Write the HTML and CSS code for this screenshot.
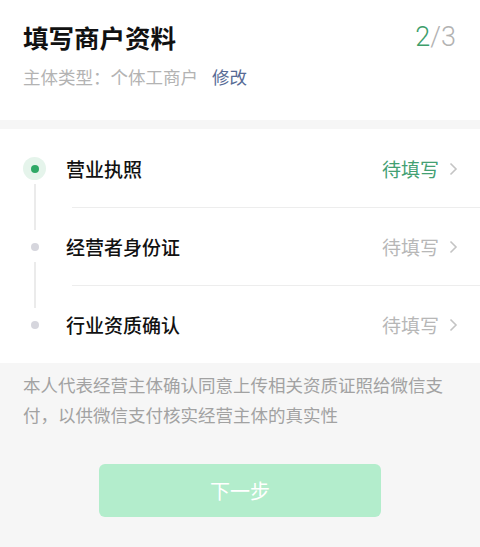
FILE: index.html
```html
<!DOCTYPE html>
<html lang="zh-CN">
  <head>
    <meta charset="utf-8"/>
    <title>填写商户资料</title>
    <link rel="stylesheet" href="styles.css">
  </head>

  <body>
    <header class="head">
      <div class="head-top">
        <h1 class="title">填写商户资料</h1>
        <div class="step"><span class="step-now">2</span>/3</div>
      </div>
      <p class="sub">主体类型：个体工商户<a class="edit" href="#">修改</a></p>
    </header>

    <ul class="steps">
      <li class="row active">
        <span class="mark"></span>
        <span class="name">营业执照</span>
        <span class="state">待填写</span>
        <svg class="arrow" width="9" height="14" viewBox="0 0 9 14"><polyline points="1.5,1.5 7,7 1.5,12.5" fill="none" stroke="#c4c4c4" stroke-width="1.6"/></svg>
      </li>
      <li class="sep"></li>
      <li class="row">
        <span class="mark"></span>
        <span class="name">经营者身份证</span>
        <span class="state">待填写</span>
        <svg class="arrow" width="9" height="14" viewBox="0 0 9 14"><polyline points="1.5,1.5 7,7 1.5,12.5" fill="none" stroke="#c4c4c4" stroke-width="1.6"/></svg>
      </li>
      <li class="sep"></li>
      <li class="row last">
        <span class="mark"></span>
        <span class="name">行业资质确认</span>
        <span class="state">待填写</span>
        <svg class="arrow" width="9" height="14" viewBox="0 0 9 14"><polyline points="1.5,1.5 7,7 1.5,12.5" fill="none" stroke="#c4c4c4" stroke-width="1.6"/></svg>
      </li>
    </ul>

    <p class="notice">本人代表经营主体确认同意上传相关资质证照给微信支付，以供微信支付核实经营主体的真实性</p>

    <div class="actions">
      <button class="next" disabled>下一步</button>
    </div>
  </body>

</html>
```

FILE: styles.css
```css
* {
  box-sizing: border-box;
}

body {
  margin: 0;
  background-color: #f6f6f6;
  color: #111;
  font-family: "Noto Sans CJK SC", "Noto Sans", sans-serif;
}

.head {
  background-color: #fff;
  padding: 19px 24px 30px 23px;
}

.head-top {
  display: flex;
  justify-content: space-between;
  align-items: center;
}

.title {
  margin: 0;
  font-size: 25.5px;
  line-height: 36px;
  font-weight: 700;
}

.step {
  font-family: Roboto, "Noto Sans", sans-serif;
  font-weight: 300;
  font-size: 27px;
  line-height: 36px;
  color: #b2b2b2;
}

.step-now {
  color: #3e9e6b;
}

.sub {
  margin: 9px 0 0;
  font-size: 17.5px;
  line-height: 26px;
  color: #b3b3b3;
}

.edit {
  margin-left: 14px;
  color: #576b95;
  text-decoration: none;
}

.steps {
  list-style: none;
  margin: 9px 0 0;
  padding: 1px 0 0;
  background-color: #fff;
}

.row {
  position: relative;
  display: flex;
  align-items: center;
  height: 77px;
  padding: 0 22px 0 23px;
}

.mark {
  position: relative;
  width: 23px;
  height: 23px;
  margin-right: 20px;
  border-radius: 50%;
}

.mark::before {
  content: "";
  position: absolute;
  left: 8px;
  top: 8px;
  width: 8px;
  height: 8px;
  border-radius: 50%;
  background-color: #d6d6dd;
}

.row.active .mark {
  background-color: #e5f4eb;
}

.row.active .mark::before {
  background-color: #2fa866;
}

/* timeline segment down to the next dot */
.mark::after {
  content: "";
  position: absolute;
  left: 11px;
  top: 27px;
  width: 1.5px;
  height: 46px;
  background-color: #ebebeb;
}

.row.last .mark::after {
  display: none;
}

.name {
  flex: 1;
  font-size: 19px;
  font-weight: 500;
}

.state {
  font-size: 19px;
  color: #b7b7b7;
  margin-right: 10px;
}

.row.active .state {
  color: #43a072;
}

.arrow {
  display: block;
}

.sep {
  height: 1px;
  margin-left: 72px;
  background-color: #ededed;
}

.notice {
  margin: 7px 0 0;
  padding: 0 23px;
  font-size: 17.5px;
  line-height: 30px;
  color: #a2a2a2;
}

.actions {
  display: flex;
  justify-content: center;
  margin-top: 34px;
}

.next {
  width: 282px;
  height: 53px;
  border: none;
  border-radius: 6px;
  background-color: #b3edcc;
  color: #fff;
  font-family: "Noto Sans CJK SC", "Noto Sans", sans-serif;
  font-size: 20px;
}
```
